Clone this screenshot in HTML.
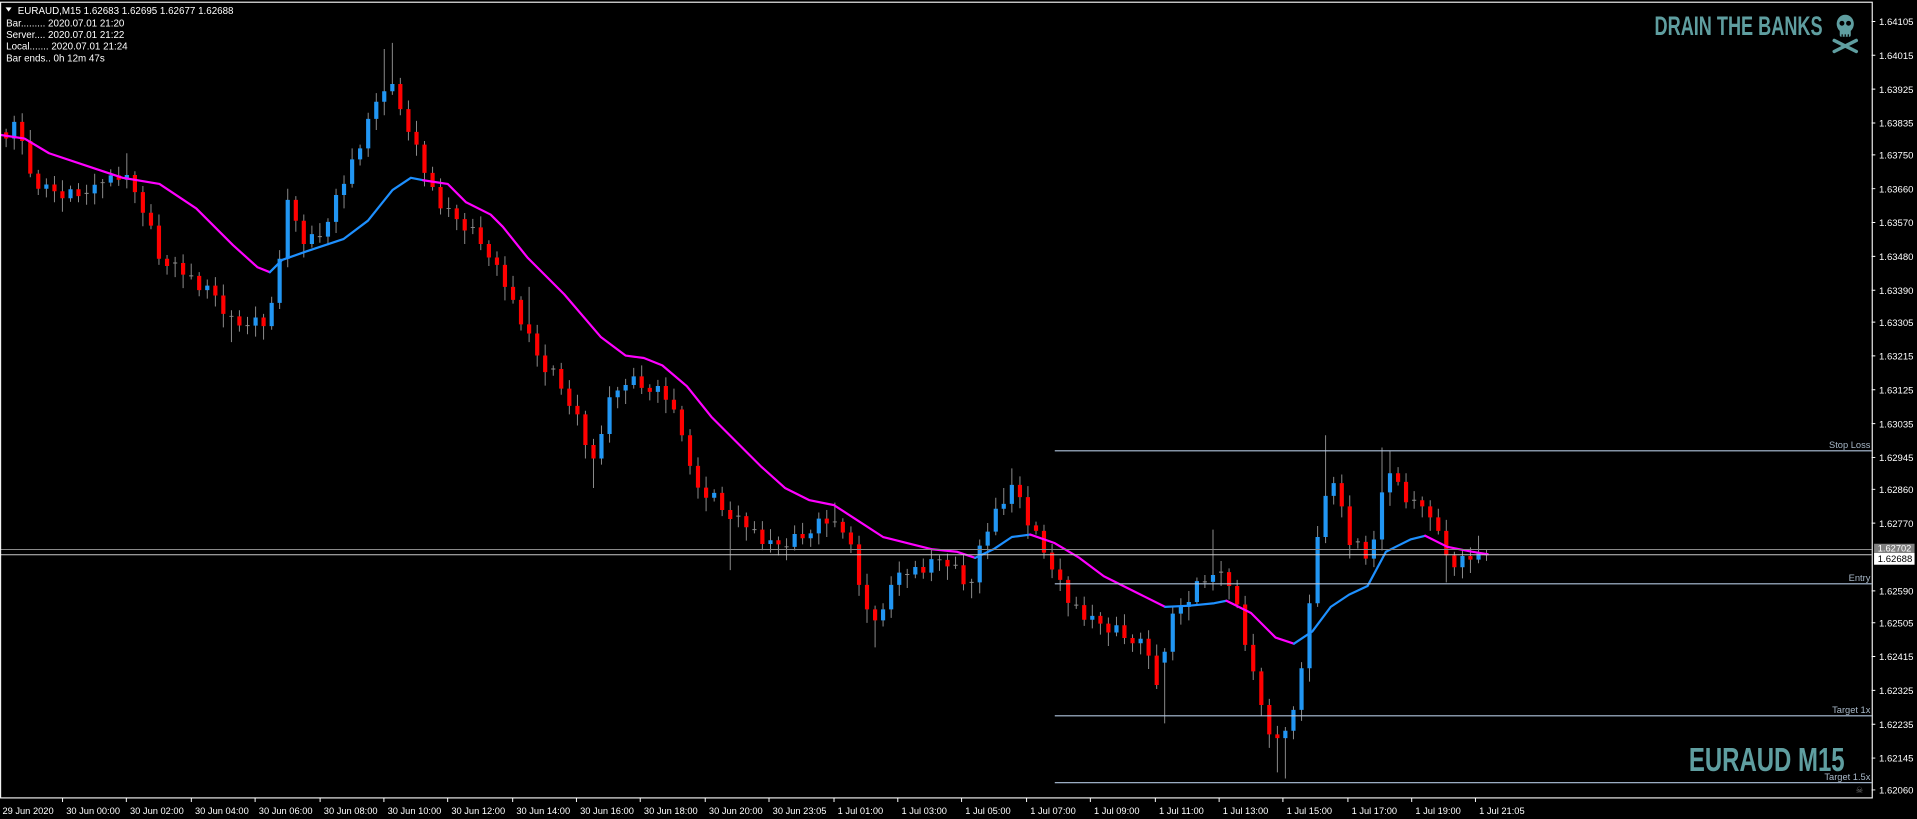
<!DOCTYPE html>
<html><head><meta charset="utf-8"><style>
html,body{margin:0;padding:0;background:#000;overflow:hidden}
svg{display:block}
text{font-family:"Liberation Sans",sans-serif}
</style></head><body>
<svg width="1917" height="819" viewBox="0 0 1563 668" preserveAspectRatio="none" xmlns="http://www.w3.org/2000/svg">
<rect x="0" y="0" width="1563" height="668" fill="#000"/>
<!-- wicks -->
<path fill="none" stroke="#8c8c8c" stroke-width="0.8" d="M5 105V120M11.6 94.4V122M18.1 92.4V126M24.7 106V144.6M31.2 138.6V159M37.8 145.5V161M44.4 143.5V165M50.9 147V172.7M57.5 151.4V164.7M64 149.4V165M70.6 150.7V167M77.2 141.7V166.7M83.7 146V161.7M90.3 138V152M96.8 136V151.6M103.4 125V153.6M110 139.7V165.7M116.5 151.7V184.5M123.1 166.5V187M129.6 175V216M136.2 208V224M142.8 209.5V226M149.3 207.5V235M155.9 215V228M162.4 222V241.6M169 228V243.6M175.6 226V250M182.1 232V267M188.7 253V279M195.2 253V270.5M201.8 258.5V272.6M208.4 250V274.6M214.9 256V277M221.5 242V269M228 204V252M234.6 154V218M241.2 160V189M247.7 175V210M254.3 184V202M260.8 182V198M267.4 178V200M274 154V190M280.5 143V170M287.1 121V153M293.6 118V135M300.2 92V128M306.8 76V106M313.3 40V94M319.9 35V77.4M326.4 63.5V94M333 82V114.6M339.6 98.6V127M346.1 115V152M352.7 136V155.5M359.2 145.5V175M365.8 161V177M372.4 167V187.7M378.9 173.7V199M385.5 178.5V191M392 176.5V204M398.6 196V217M405.2 205V225M411.7 209V245M418.3 225V247.6M424.8 241.6V269.6M431.4 234V279M438 265V299M444.5 281V314.5M451.1 298V306.5M457.6 296V322M464.2 310V338M470.8 322V347M477.3 335V374M483.9 358V398M490.4 347V379M497 315V361M503.6 315.5V333M510.1 309V329.5M516.7 300V317M523.2 298V321.4M529.8 313.4V326.6M536.4 309.8V328.6M542.9 307.8V337M549.5 317V337M556 331V360M562.6 350V387M569.1 373V406.7M575.7 388.7V417M582.3 399V409M588.8 397V421M595.4 409V465M602 412.3V430M608.5 418V441M615.1 425V435M621.6 425V448.7M628.2 431.6V450.7M634.7 437.6V453M641.3 439V457M647.9 428.5V449M654.4 426.5V444M661 432V446M667.6 418V444M674.1 416V438M680.7 410V430M687.2 422.7V439.3M693.8 429.3V451M700.4 437V486M706.9 468V508M713.5 494V528M720 492V511M726.6 470V504M733.2 458V486M739.7 464V479.6M746.3 457.5V471.6M752.8 455.5V472M759.4 447V474M766 453V465.6M772.5 451.6V473M779.1 454V464M785.6 452V481.5M792.2 472V488M798.8 440V484M805.3 426.6V456M811.9 406V436.6M818.4 398V420M825 382V418M831.6 388.5V414.5M838.1 396.5V439.5M844.7 425.5V436M851.2 428V455.7M857.8 443.7V471.5M864.4 455.5V482M870.9 470V502.7M877.5 486.7V496.6M884 486.6V510.5M890.6 493.3V512.5M897.2 499.3V517.6M903.7 503.6V526.9M910.3 503V518.9M916.8 501V525.4M923.4 517.4V531.7M930 516V533.7M936.5 514V545.7M943.1 525.7V562M949.6 528.6V590M956.2 495.5V538.6M962.8 488V509.5M969.3 482V506M975.9 471V494M982.4 469V479.6M989 432V481.6M995.6 457.6V478M1002.1 463.6V489M1008.7 473V496M1015.2 486V531M1021.8 517V554.6M1028.4 544.6V584M1034.9 570V610M1041.5 592V630M1048 593V635M1054.6 576V603M1061.2 540V588M1067.7 485V556M1074.3 429V495M1080.8 355V443M1087.4 389V411.5M1094 387V422M1100.5 404V455.5M1107.1 439V447.5M1113.6 437V460.6M1120.2 433V462.6M1126.8 365V449M1133.3 368V412.6M1139.9 381V396M1146.4 386V414.6M1153 400.6V415M1159.6 405V422M1166.1 408V433M1172.7 415V436M1179.2 424V475M1185.8 450V469.7M1192.4 448.5V471.7M1198.9 446.5V467.4M1205.5 437V459.4M1212 448.6V457.5"/>
<!-- doji ticks -->
<path fill="none" stroke="#8c8c8c" stroke-width="0.8" d="M68.9 157.7h3.4M82 149h3.4M141.1 214.5h3.4M154.2 225h3.4M187 258h3.4M200.1 265.6h3.4M259.1 193h3.4M364.1 170h3.4M383.8 185.5h3.4M449.4 301h3.4M600.3 421h3.4M613.4 432h3.4M639.6 446h3.4M679 425.7h3.4M738 468.6h3.4M764.3 456.6h3.4M777.4 461h3.4M790.5 475h3.4M875.8 493.6h3.4M980.7 474.6h3.4M993.9 466.6h3.4M1105.4 442h3.4M1151.3 408h3.4M1210.3 452.5h3.4"/>
<!-- red bodies -->
<path fill="#ff0000" d="M3.3 108h3.4v5h-3.4zM16.4 99.4h3.4v15.6h-3.4zM23 115h3.4v26.6h-3.4zM29.5 141.6h3.4v12.4h-3.4zM42.7 150.5h3.4v5.5h-3.4zM49.2 156h3.4v5.7h-3.4zM62.3 154.4h3.4v5.6h-3.4zM95.1 143h3.4v3.6h-3.4zM108.3 142.7h3.4v14h-3.4zM114.8 156.7h3.4v16.8h-3.4zM121.4 173.5h3.4v10.5h-3.4zM127.9 184h3.4v27h-3.4zM134.5 211h3.4v6h-3.4zM147.6 214.5h3.4v9.5h-3.4zM160.7 225h3.4v11.6h-3.4zM173.9 233h3.4v8h-3.4zM180.4 241h3.4v15h-3.4zM193.5 258h3.4v7.5h-3.4zM213.2 259h3.4v7h-3.4zM239.5 163h3.4v17h-3.4zM246 180h3.4v19h-3.4zM324.7 68.5h3.4v20.5h-3.4zM331.3 89h3.4v18.6h-3.4zM337.9 107.6h3.4v10.4h-3.4zM344.4 118h3.4v23h-3.4zM351 141h3.4v11.5h-3.4zM357.5 152.5h3.4v17.5h-3.4zM370.7 170h3.4v8.7h-3.4zM377.2 178.7h3.4v9.3h-3.4zM390.3 185.5h3.4v13.5h-3.4zM396.9 199h3.4v11h-3.4zM403.5 210h3.4v6h-3.4zM410 216h3.4v18h-3.4zM416.6 234h3.4v10.6h-3.4zM423.1 244.6h3.4v20h-3.4zM429.7 264.6h3.4v7.4h-3.4zM436.3 272h3.4v18h-3.4zM442.8 290h3.4v13.5h-3.4zM455.9 301h3.4v16h-3.4zM462.5 317h3.4v14h-3.4zM469.1 331h3.4v7h-3.4zM475.6 338h3.4v25h-3.4zM482.2 363h3.4v11h-3.4zM521.5 307h3.4v9.4h-3.4zM528.1 316.4h3.4v3.2h-3.4zM541.2 314.8h3.4v11.2h-3.4zM547.8 326h3.4v8h-3.4zM554.3 334h3.4v21h-3.4zM560.9 355h3.4v25h-3.4zM567.4 380h3.4v17.7h-3.4zM574 397.7h3.4v8.3h-3.4zM587.1 402h3.4v14h-3.4zM593.7 416h3.4v7.3h-3.4zM606.8 421h3.4v9h-3.4zM619.9 432h3.4v11.7h-3.4zM633 440.6h3.4v3.4h-3.4zM652.7 435.5h3.4v3.5h-3.4zM672.4 423h3.4v4h-3.4zM685.5 425.7h3.4v8.6h-3.4zM692.1 434.3h3.4v9.7h-3.4zM698.7 444h3.4v33h-3.4zM705.2 477h3.4v20h-3.4zM711.8 497h3.4v9h-3.4zM751.1 462.5h3.4v4.5h-3.4zM770.8 456.6h3.4v5.4h-3.4zM783.9 461h3.4v15.5h-3.4zM829.9 395.5h3.4v10h-3.4zM836.4 405.5h3.4v23h-3.4zM843 428.5h3.4v4.5h-3.4zM849.5 433h3.4v17.7h-3.4zM856.1 450.7h3.4v13.8h-3.4zM862.7 464.5h3.4v8.5h-3.4zM869.2 473h3.4v18.7h-3.4zM882.3 493.6h3.4v11.9h-3.4zM895.5 502.3h3.4v6.3h-3.4zM902 508.6h3.4v7.3h-3.4zM915.1 510h3.4v10.4h-3.4zM921.7 520.4h3.4v4.3h-3.4zM934.8 521h3.4v13.7h-3.4zM941.4 534.7h3.4v24h-3.4zM1000.4 466.6h3.4v11.4h-3.4zM1007 478h3.4v15h-3.4zM1013.5 493h3.4v33h-3.4zM1020.1 526h3.4v21.6h-3.4zM1026.7 547.6h3.4v27.4h-3.4zM1033.2 575h3.4v24h-3.4zM1039.8 599h3.4v3h-3.4zM1092.3 394h3.4v19h-3.4zM1098.8 413h3.4v31.5h-3.4zM1111.9 442h3.4v13.6h-3.4zM1138.2 386h3.4v7h-3.4zM1144.7 393h3.4v16.6h-3.4zM1157.9 408h3.4v5h-3.4zM1164.4 413h3.4v9h-3.4zM1171 422h3.4v11h-3.4zM1177.5 433h3.4v20h-3.4zM1184.1 453h3.4v9.7h-3.4zM1197.2 453.5h3.4v2.9h-3.4z"/>
<!-- blue bodies -->
<path fill="#2196f3" d="M9.9 99.4h3.4v13.6h-3.4zM36.1 150.5h3.4v3.5h-3.4zM55.8 154.4h3.4v7.3h-3.4zM75.5 150.7h3.4v7h-3.4zM88.6 143h3.4v6h-3.4zM101.7 142.7h3.4v3.9h-3.4zM167.3 233h3.4v3.6h-3.4zM206.7 259h3.4v6.6h-3.4zM219.8 247h3.4v19h-3.4zM226.3 211h3.4v36h-3.4zM232.9 163h3.4v48h-3.4zM252.6 191h3.4v8h-3.4zM265.7 181h3.4v12h-3.4zM272.3 159h3.4v22h-3.4zM278.8 150h3.4v9h-3.4zM285.4 130h3.4v20h-3.4zM291.9 121h3.4v9h-3.4zM298.5 97h3.4v24h-3.4zM305.1 83h3.4v14h-3.4zM311.6 74.4h3.4v8.6h-3.4zM318.2 68.5h3.4v5.9h-3.4zM488.7 354h3.4v20h-3.4zM495.3 324h3.4v30h-3.4zM501.9 318.5h3.4v5.5h-3.4zM508.4 314h3.4v4.5h-3.4zM515 307h3.4v7h-3.4zM534.7 314.8h3.4v4.8h-3.4zM580.6 402h3.4v4h-3.4zM626.5 440.6h3.4v3.1h-3.4zM646.2 435.5h3.4v10.5h-3.4zM659.3 435h3.4v4h-3.4zM665.9 423h3.4v12h-3.4zM718.3 497h3.4v9h-3.4zM724.9 477h3.4v20h-3.4zM731.5 467h3.4v10h-3.4zM744.6 462.5h3.4v6.1h-3.4zM757.7 456h3.4v11h-3.4zM797.1 445h3.4v30h-3.4zM803.6 433.6h3.4v11.4h-3.4zM810.2 415h3.4v18.6h-3.4zM816.7 411h3.4v4h-3.4zM823.3 395.5h3.4v15.5h-3.4zM888.9 502.3h3.4v3.2h-3.4zM908.6 510h3.4v5.9h-3.4zM928.3 521h3.4v3.7h-3.4zM947.9 531.6h3.4v8.9h-3.4zM954.5 500.5h3.4v31.1h-3.4zM961.1 495h3.4v5.5h-3.4zM967.6 491h3.4v4h-3.4zM974.2 474h3.4v17h-3.4zM987.3 469h3.4v5.6h-3.4zM1046.3 596h3.4v6h-3.4zM1052.9 579h3.4v17h-3.4zM1059.5 545h3.4v34h-3.4zM1066 492h3.4v53h-3.4zM1072.6 438h3.4v54h-3.4zM1079.1 404.5h3.4v33.5h-3.4zM1085.7 394h3.4v10.5h-3.4zM1118.5 440h3.4v15.6h-3.4zM1125.1 401.6h3.4v38.4h-3.4zM1131.6 386h3.4v15.6h-3.4zM1190.7 453.5h3.4v9.2h-3.4zM1203.8 451.6h3.4v4.8h-3.4z"/>
<!-- moving average -->
<g fill="none" stroke-width="1.8" stroke-linecap="round" stroke-linejoin="round">
<polyline stroke="#ff00ff" points="0,110 20,113 40,125 70,135 100,145 130,150 160,170 190,200 210,218 220,222"/>
<polyline stroke="#1e90ff" points="220,222 230,212 250,205 280,195 300,180 320,155 335,145 345,147"/>
<polyline stroke="#ff00ff" points="345,147 365,150 380,165 400,175 410,185 430,210 460,240 490,275 510,290 525,292 540,298 560,315 580,340 600,360 620,380 640,398 660,408 680,412 700,425 720,438 740,443 760,448 780,450 795,455"/>
<polyline stroke="#1e90ff" points="795,455 810,448 825,438 840,436"/>
<polyline stroke="#ff00ff" points="840,436 860,443 880,455 900,470 930,485 950,495"/>
<polyline stroke="#1e90ff" points="950,495 970,494 990,492 1000,490"/>
<polyline stroke="#ff00ff" points="1000,490 1020,500 1040,520 1055,525"/>
<polyline stroke="#1e90ff" points="1055,525 1070,515 1085,495 1100,485 1115,478 1130,450 1150,440 1162,437"/>
<polyline stroke="#ff00ff" points="1162,437 1180,446 1200,450 1213,452"/>
</g>
<!-- price lines -->
<line x1="0" y1="448.2" x2="1526" y2="448.2" stroke="#8a8a8a" stroke-width="0.8"/>
<line x1="0" y1="452.5" x2="1526" y2="452.5" stroke="#c8c8c8" stroke-width="0.8"/>
<!-- levels -->
<g stroke="#b0c4de" stroke-width="0.9">
<line x1="860" y1="367.7" x2="1526" y2="367.7"/>
<line x1="860" y1="476.2" x2="1526" y2="476.2"/>
<line x1="860" y1="583.8" x2="1526" y2="583.8"/>
<line x1="860" y1="638.4" x2="1526" y2="638.4"/>
</g>
<g fill="#a8b8c8" font-size="7.6" text-anchor="end">
<text x="1525" y="365.5">Stop Loss</text>
<text x="1525" y="474">Entry</text>
<text x="1525" y="581.5">Target 1x</text>
<text x="1525" y="636">Target 1.5x</text>
</g>
<!-- frame -->
<rect x="0.5" y="1.8" width="1526" height="649" fill="none" stroke="#fff" stroke-width="0.9"/>
<!-- header -->
<polygon points="4.5,6 9.5,6 7,9.5" fill="#fff"/>
<g fill="#fff" font-size="8">
<text x="14.5" y="11.5">EURAUD,M15  1.62683 1.62695 1.62677 1.62688</text>
<text x="5" y="21.5">Bar......... 2020.07.01 21:20</text>
<text x="5" y="31">Server.... 2020.07.01 21:22</text>
<text x="5" y="40.5">Local....... 2020.07.01 21:24</text>
<text x="5" y="50">Bar ends.. 0h 12m 47s</text>
</g>
<!-- watermark -->
<text x="1349" y="28.5" font-size="22" font-weight="bold" fill="#5f9ea0" textLength="137" lengthAdjust="spacingAndGlyphs">DRAIN THE BANKS</text>
<g fill="#5f9ea0">
<ellipse cx="1504.5" cy="19.5" rx="7" ry="7.5"/>
<rect x="1500" y="24" width="9" height="6" rx="1.5"/>
<circle cx="1501.8" cy="19" r="2" fill="#000"/>
<circle cx="1507.2" cy="19" r="2" fill="#000"/>
<rect x="1501.5" y="28" width="1" height="2" fill="#000"/>
<rect x="1504" y="28" width="1" height="2" fill="#000"/>
<rect x="1506.5" y="28" width="1" height="2" fill="#000"/>
</g>
<g stroke="#5f9ea0" stroke-width="2.8" stroke-linecap="round">
<line x1="1495.5" y1="33" x2="1513.5" y2="42"/>
<line x1="1513.5" y1="33" x2="1495.5" y2="42"/>
</g>
<text x="1377" y="629" font-size="27" font-weight="bold" fill="#5f9ea0" textLength="127" lengthAdjust="spacingAndGlyphs">EURAUD M15</text>
<text x="1513" y="647" font-size="7" fill="#777">☠</text>
<!-- price axis ticks -->
<path stroke="#fff" stroke-width="0.8" d="M1526 17.5h3M1526 45.1h3M1526 72.7h3M1526 100.3h3M1526 126.3h3M1526 153.9h3M1526 181.5h3M1526 209.1h3M1526 236.7h3M1526 262.7h3M1526 290.3h3M1526 317.9h3M1526 345.5h3M1526 373.1h3M1526 399.1h3M1526 426.7h3M1526 481.9h3M1526 507.9h3M1526 535.5h3M1526 563.1h3M1526 590.7h3M1526 618.3h3M1526 644.3h3"/>
<g fill="#fff" font-size="7.8">
<text x="1532" y="20.5">1.64105</text>
<text x="1532" y="48.1">1.64015</text>
<text x="1532" y="75.7">1.63925</text>
<text x="1532" y="103.3">1.63835</text>
<text x="1532" y="129.3">1.63750</text>
<text x="1532" y="156.9">1.63660</text>
<text x="1532" y="184.5">1.63570</text>
<text x="1532" y="212.1">1.63480</text>
<text x="1532" y="239.7">1.63390</text>
<text x="1532" y="265.7">1.63305</text>
<text x="1532" y="293.3">1.63215</text>
<text x="1532" y="320.9">1.63125</text>
<text x="1532" y="348.5">1.63035</text>
<text x="1532" y="376.1">1.62945</text>
<text x="1532" y="402.1">1.62860</text>
<text x="1532" y="429.7">1.62770</text>
<text x="1532" y="484.9">1.62590</text>
<text x="1532" y="510.9">1.62505</text>
<text x="1532" y="538.5">1.62415</text>
<text x="1532" y="566.1">1.62325</text>
<text x="1532" y="593.7">1.62235</text>
<text x="1532" y="621.3">1.62145</text>
<text x="1532" y="647.3">1.62060</text>
</g>
<rect x="1528" y="443.5" width="33" height="7.5" fill="#808080"/>
<text x="1531" y="450" font-size="7.6" fill="#fff">1.62702</text>
<rect x="1528" y="451" width="33" height="9.6" fill="#fff"/>
<text x="1531" y="458.5" font-size="7.8" fill="#000">1.62688</text>
<!-- time axis ticks -->
<path stroke="#fff" stroke-width="0.8" d="M51 650.6v3.5M103 650.6v3.5M156 650.6v3.5M208 650.6v3.5M261 650.6v3.5M313 650.6v3.5M365 650.6v3.5M418 650.6v3.5M470 650.6v3.5M522 650.6v3.5M575 650.6v3.5M627 650.6v3.5M680 650.6v3.5M732 650.6v3.5M784 650.6v3.5M837 650.6v3.5M889 650.6v3.5M942 650.6v3.5M994 650.6v3.5M1046 650.6v3.5M1099 650.6v3.5M1151 650.6v3.5M1203 650.6v3.5"/>
<g fill="#fff" font-size="7.6">
<text x="2" y="664">29 Jun 2020</text>
<text x="54" y="664">30 Jun 00:00</text>
<text x="106" y="664">30 Jun 02:00</text>
<text x="159" y="664">30 Jun 04:00</text>
<text x="211" y="664">30 Jun 06:00</text>
<text x="264" y="664">30 Jun 08:00</text>
<text x="316" y="664">30 Jun 10:00</text>
<text x="368" y="664">30 Jun 12:00</text>
<text x="421" y="664">30 Jun 14:00</text>
<text x="473" y="664">30 Jun 16:00</text>
<text x="525" y="664">30 Jun 18:00</text>
<text x="578" y="664">30 Jun 20:00</text>
<text x="630" y="664">30 Jun 23:05</text>
<text x="683" y="664">1 Jul 01:00</text>
<text x="735" y="664">1 Jul 03:00</text>
<text x="787" y="664">1 Jul 05:00</text>
<text x="840" y="664">1 Jul 07:00</text>
<text x="892" y="664">1 Jul 09:00</text>
<text x="945" y="664">1 Jul 11:00</text>
<text x="997" y="664">1 Jul 13:00</text>
<text x="1049" y="664">1 Jul 15:00</text>
<text x="1102" y="664">1 Jul 17:00</text>
<text x="1154" y="664">1 Jul 19:00</text>
<text x="1206" y="664">1 Jul 21:05</text>
</g>
</svg>
</body></html>
